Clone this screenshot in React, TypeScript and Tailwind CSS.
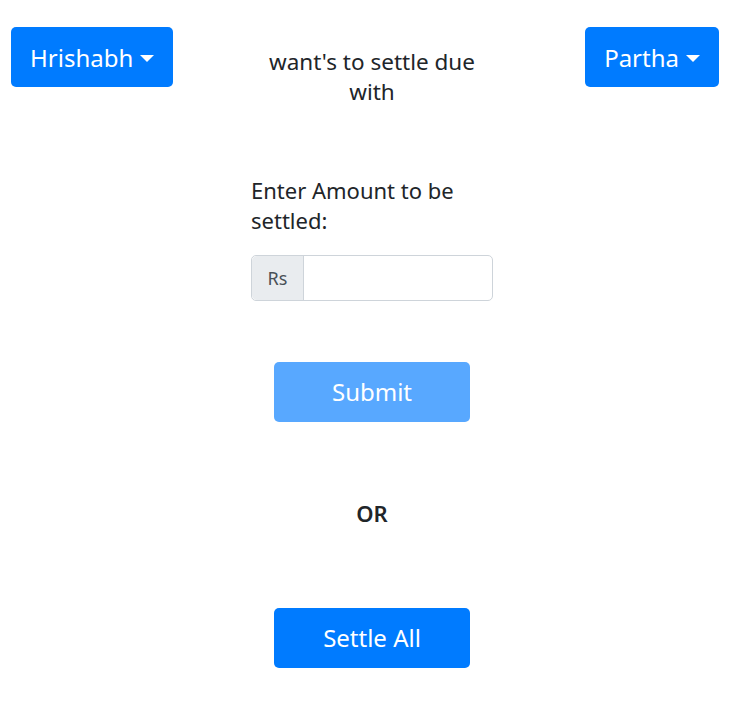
export default function App() {
  return (
    <div className="min-h-[702px] bg-white pl-[7px] font-['Noto_Sans',sans-serif] text-[#212529]">
      {/* Top row */}
      <div className="grid grid-cols-[1fr_auto_1fr] items-start pt-[27px]">
        <div className="flex justify-start pl-[4px]">
          <button className="flex h-[60px] items-center gap-[7px] rounded-[5px] bg-[#007bff] px-[19px] pt-[2px] text-[24px] text-white">
            Hrishabh
            <span className="inline-block h-0 w-0 border-x-[7px] border-t-[7px] border-x-transparent border-t-white" />
          </button>
        </div>
        <div className="mt-[20px] w-[230px] text-center text-[22.5px] leading-[30px]">
          want's to settle due with
        </div>
        <div className="flex justify-end pr-[18px]">
          <button className="flex h-[60px] items-center gap-[7px] rounded-[5px] bg-[#007bff] px-[19px] pt-[2px] text-[24px] text-white">
            Partha
            <span className="inline-block h-0 w-0 border-x-[7px] border-t-[7px] border-x-transparent border-t-white" />
          </button>
        </div>
      </div>

      {/* Amount form */}
      <div className="mx-auto mt-[68px] w-[242px]">
        <label className="block text-[22px] leading-[30px]">Enter Amount to be settled:</label>
        <div className="mt-[20px] flex h-[46px] rounded-[5px] border border-[#ced4da]">
          <span className="flex w-[52px] items-center justify-center rounded-l-[5px] border-r border-[#ced4da] bg-[#e9ecef] text-[18px] text-[#495057]">
            Rs
          </span>
          <input type="text" className="min-w-0 flex-1 rounded-r-[5px] px-3 outline-none" />
        </div>
      </div>

      <div className="mt-[61px] flex justify-center">
        <button disabled className="h-[60px] w-[196px] rounded-[5px] bg-[#007bff] text-[24px] text-white opacity-65">
          Submit
        </button>
      </div>

      <div className="mt-[76px] text-center text-[22px] font-semibold leading-[30px]">OR</div>

      <div className="mt-[80px] flex justify-center">
        <button className="h-[60px] w-[196px] rounded-[5px] bg-[#007bff] text-[24px] text-white">
          Settle All
        </button>
      </div>
    </div>
  );
}
